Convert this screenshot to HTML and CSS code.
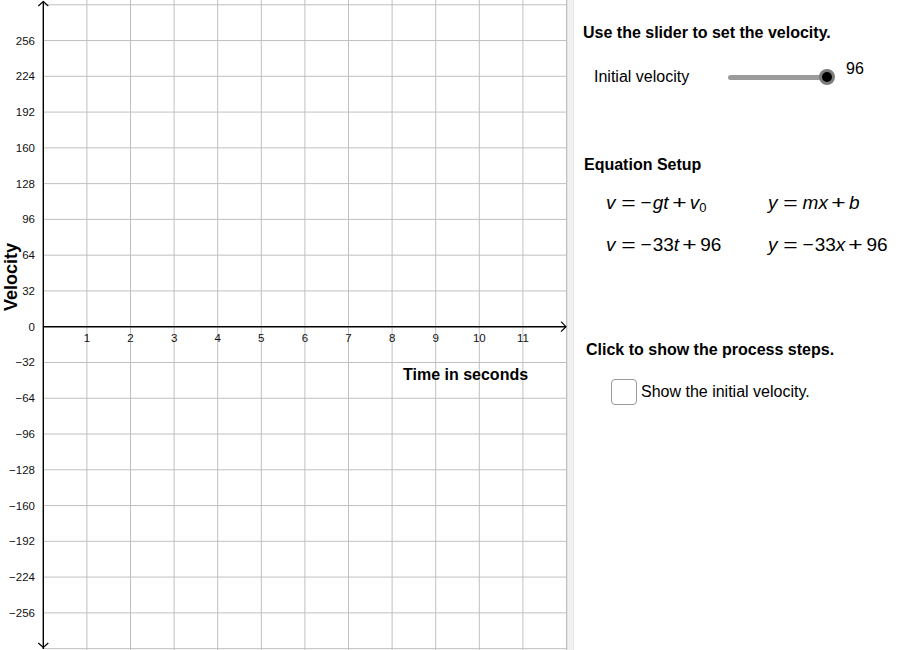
FILE: index.html
```html
<!DOCTYPE html>
<html lang="en">
<head>
<meta charset="UTF-8">
<meta name="viewport" content="width=device-width, initial-scale=1.0">
<title>Velocity</title>
<link rel="stylesheet" href="styles.css">
</head>
<body>
  <div class="app">
    <div class="graph">
      <svg id="graph" width="567" height="650" viewBox="0 0 567 650"></svg>
    </div>
    <div class="divider"></div>
    <div class="panel">
      <div class="heading intro">Use the slider to set the velocity.</div>
      <div class="slider-row">
        <span class="slider-label">Initial velocity</span>
        <div class="slider">
          <div class="track"></div>
          <div class="thumb"></div>
        </div>
        <span class="slider-value">96</span>
      </div>

      <div class="heading setup">Equation Setup</div>
      <div class="equations">
        <div class="eq"><i>v</i><span class="rel">=</span><span class="neg">−</span><i>g</i><i>t</i><span class="bin">+</span><i>v</i><sub>0</sub></div>
        <div class="eq"><i>y</i><span class="rel">=</span><i>m</i><i>x</i><span class="bin">+</span><i>b</i></div>
        <div class="eq"><i>v</i><span class="rel">=</span><span class="neg">−</span>33<i>t</i><span class="bin">+</span>96</div>
        <div class="eq"><i>y</i><span class="rel">=</span><span class="neg">−</span>33<i>x</i><span class="bin">+</span>96</div>
      </div>

      <div class="heading steps">Click to show the process steps.</div>
      <label class="check-row">
        <span class="box"></span>
        Show the initial velocity.
      </label>
    </div>
  </div>
  <script>
    const svg = document.getElementById('graph');
    const ox = 43.3, oy = 326.7;   // origin
    const sx = 43.6, sy = 35.77;   // px per 1 s, px per 32 units

    let out = '';

    // grid
    for (let i = 1; i <= 12; i++) {
      const x = ox + i * sx;
      out += `<line class="grid" x1="${x}" y1="0" x2="${x}" y2="650"/>`;
    }
    for (let k = -9; k <= 9; k++) {
      if (k === 0) continue;
      const y = oy - k * sy;
      out += `<line class="grid" x1="${ox}" y1="${y}" x2="567" y2="${y}"/>`;
    }

    // axes
    out += `<line class="axis" x1="${ox}" y1="1" x2="${ox}" y2="649"/>`;
    out += `<line class="axis" x1="${ox}" y1="${oy}" x2="566" y2="${oy}"/>`;
    out += `<polyline class="arrow" points="${ox - 5},6 ${ox},1.5 ${ox + 5},6"/>`;
    out += `<polyline class="arrow" points="${ox - 5},643 ${ox},647.5 ${ox + 5},643"/>`;
    out += `<polyline class="arrow" points="561,${oy - 5} 566,${oy} 561,${oy + 5}"/>`;

    // tick labels
    for (let k = -8; k <= 8; k++) {
      const y = oy - k * sy;
      const txt = k < 0 ? '\u2212' + (-k * 32) : String(k * 32);
      out += `<text class="tick" x="35" y="${y + 4}" text-anchor="end">${txt}</text>`;
    }
    for (let i = 1; i <= 11; i++) {
      const x = ox + i * sx;
      out += `<text class="tick" x="${x}" y="342" text-anchor="middle">${i}</text>`;
    }

    // axis titles
    out += `<text class="axis-title" x="403" y="380">Time in seconds</text>`;
    out += `<text class="axis-title velocity" transform="translate(16.5,277) rotate(-90)" text-anchor="middle">Velocity</text>`;

    svg.innerHTML = out;
  </script>
</body>
</html>
```

FILE: styles.css
```css
body {
  font-family: 'Liberation Sans', Arial, sans-serif;
  font-size: 16px;
  color: #000;
  margin: 0;
  background-color: #fff;
}
.app {
  display: flex;
  height: 650px;
  overflow: hidden;
}
.graph {
  width: 567px;
  flex: none;
}
.graph svg {
  display: block;
}
.grid {
  stroke: #c0c0c0;
  stroke-width: 1;
}
.axis {
  stroke: #000;
  stroke-width: 1.4;
}
.arrow {
  fill: none;
  stroke: #000;
  stroke-width: 1.2;
}
.tick {
  font-family: 'Liberation Sans', Arial, sans-serif;
  font-size: 11.5px;
  fill: #111;
}
.axis-title {
  font-family: 'Liberation Sans', Arial, sans-serif;
  font-size: 16px;
  font-weight: bold;
  fill: #000;
}
.axis-title.velocity {
  font-size: 18px;
}
.divider {
  width: 5px;
  flex: none;
  background-color: #f2f2f2;
  border-left: 1px solid #e2e2e2;
  border-right: 1px solid #e6e6e6;
}
.panel {
  flex: 1;
  padding-left: 9px;
}
.heading {
  font-weight: bold;
  line-height: 18px;
}
.intro {
  margin-top: 24px;
}
.slider-row {
  display: flex;
  align-items: center;
  height: 30px;
  margin-top: 20px;
  margin-left: 11px;
}
.slider-label {
  width: 134px;
  line-height: 18px;
}
.slider {
  position: relative;
  width: 99px;
  height: 5px;
}
.track {
  height: 5px;
  border-radius: 3px;
  background-color: #9b9b9b;
}
.thumb {
  position: absolute;
  right: -8px;
  top: -5.5px;
  width: 16px;
  height: 16px;
  box-sizing: border-box;
  border-radius: 50%;
  border: 3px solid #7c7c7c;
  background-color: #000;
}
.slider-value {
  align-self: flex-start;
  margin-top: -2px;
  margin-left: 19px;
  line-height: 18px;
}
.setup {
  margin-top: 64px;
  margin-left: 1px;
}
.equations {
  display: grid;
  grid-template-columns: 162px auto;
  row-gap: 20px;
  margin-top: 18px;
  padding-left: 23px;
  font-size: 19px;
  line-height: 22px;
}
.eq {
  white-space: nowrap;
}
.eq sub {
  font-size: 13px;
  line-height: 0;
  vertical-align: -3px;
}
.rel,
.bin {
  display: inline-block;
  transform: scaleX(1.3);
}
.rel {
  margin: 0 7px;
}
.bin {
  margin: 0 5px;
}
.neg {
  margin-right: 1px;
}
.steps {
  margin-top: 85px;
  margin-left: 3px;
}
.check-row {
  display: flex;
  align-items: center;
  gap: 4px;
  margin-top: 20px;
  margin-left: 28px;
  line-height: 18px;
}
.box {
  width: 26px;
  height: 26px;
  box-sizing: border-box;
  border: 1.5px solid #9a9a9a;
  border-radius: 4px;
  background-color: #fff;
}
```
